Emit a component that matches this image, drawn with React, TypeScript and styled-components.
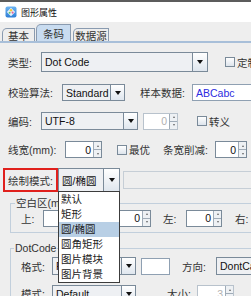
import React from 'react';
import styled, { createGlobalStyle } from 'styled-components';

const GlobalStyle = createGlobalStyle`
  html, body {
    margin: 0;
    padding: 0;
    background: #eeeeee;
  }
  body {
    font-family: "Liberation Sans", "Noto Sans CJK SC", sans-serif;
  }
`;

const Frame = styled.div`
  position: relative;
  width: 251px;
  height: 296px;
  overflow: hidden;
  box-sizing: border-box;
  border-top: 2px solid #5c5c5c;
  background: #eeeeee;
  color: #333333;
  font-size: 10.5px;
`;

const TitleBar = styled.div`
  display: flex;
  align-items: center;
  gap: 4px;
  height: 20px;
  padding-left: 5px;
  background: #ffffff;
  color: #111111;
  font-size: 9px;
`;

const TabStrip = styled.div`
  display: flex;
  align-items: flex-end;
  height: 21px;
  box-sizing: border-box;
  padding-left: 2px;
  border-bottom: 2px solid #a8bfd9;
`;

const Tab = styled.div<{ $active?: boolean; $w: number; $ml: number }>`
  display: flex;
  align-items: center;
  justify-content: center;
  box-sizing: border-box;
  width: ${(p) => p.$w}px;
  height: ${(p) => (p.$active ? 17 : 13)}px;
  margin-left: ${(p) => p.$ml}px;
  border: 1px solid #8a9bb0;
  border-bottom: none;
  border-top-left-radius: 5px;
  background: ${(p) => (p.$active ? '#c9dcf0' : '#eeeeee')};
  font-size: 10.5px;
  color: #333333;
`;

const Content = styled.div`
  display: flex;
  flex-direction: column;
  padding-left: 8px;
`;

const Row = styled.div<{ $h: number; $mt: number }>`
  display: flex;
  align-items: center;
  height: ${(p) => p.$h}px;
  margin-top: ${(p) => p.$mt}px;
  white-space: nowrap;
`;

const Label = styled.span<{ $w: number; $ml?: number }>`
  flex: none;
  width: ${(p) => p.$w}px;
  margin-left: ${(p) => p.$ml || 0}px;
  color: #333333;
`;

const ComboWrap = styled.div<{ $w: number }>`
  position: relative;
  flex: none;
  display: flex;
  box-sizing: border-box;
  width: ${(p) => p.$w}px;
  height: 100%;
  border: 1px solid #7a8a99;
  background: #eef0f3;
`;

const ComboValue = styled.span`
  flex: 1;
  display: flex;
  align-items: center;
  padding-left: 3px;
  overflow: hidden;
  color: #111111;
`;

const ComboButton = styled.span<{ $w: number }>`
  flex: none;
  display: flex;
  align-items: center;
  justify-content: center;
  width: ${(p) => p.$w}px;
  border-left: 1px solid #7a8a99;
  background: linear-gradient(#ffffff, #dfe6ee);

  &::after {
    content: '';
    border-left: 3.5px solid transparent;
    border-right: 3.5px solid transparent;
    border-top: 4px solid #111111;
  }
`;

const SpinWrap = styled.div<{ $w: number; $ml?: number; $disabled?: boolean }>`
  flex: none;
  display: flex;
  box-sizing: border-box;
  width: ${(p) => p.$w}px;
  height: 17px;
  margin-left: ${(p) => p.$ml || 0}px;
  border: 1px solid ${(p) => (p.$disabled ? '#b8c2cc' : '#7a8a99')};
  background: #ffffff;
  color: ${(p) => (p.$disabled ? '#b0b0b0' : '#111111')};
`;

const SpinValue = styled.span`
  flex: 1;
  display: flex;
  align-items: center;
  justify-content: flex-end;
  padding-right: 2px;
`;

const SpinButtons = styled.span`
  flex: none;
  display: flex;
  flex-direction: column;
  width: 7px;
  border-left: 1px solid #a0acb8;
`;

const SpinHalf = styled.span<{ $down?: boolean }>`
  flex: 1;
  display: flex;
  align-items: center;
  justify-content: center;
  background: #eef1f4;
  border-top: ${(p) => (p.$down ? '1px solid #a0acb8' : 'none')};

  &::after {
    content: '';
    border-left: 1.5px solid transparent;
    border-right: 1.5px solid transparent;
    ${(p) =>
      p.$down ? 'border-top: 2px solid #666;' : 'border-bottom: 2px solid #666;'}
  }
`;

const CheckGroup = styled.span<{ $w?: number; $ml: number }>`
  flex: none;
  display: flex;
  align-items: center;
  gap: 2px;
  width: ${(p) => (p.$w ? `${p.$w}px` : 'auto')};
  margin-left: ${(p) => p.$ml}px;
`;

const CheckBox = styled.span`
  display: inline-block;
  box-sizing: border-box;
  width: 10px;
  height: 10px;
  border: 1px solid #7a8a99;
  background: linear-gradient(#ffffff, #dde4ec);
`;

const TextField = styled.div<{ $w: number; $ml?: number; $h?: number; $faint?: boolean }>`
  flex: none;
  display: flex;
  align-items: center;
  box-sizing: border-box;
  width: ${(p) => p.$w}px;
  height: ${(p) => p.$h || 17}px;
  margin-left: ${(p) => p.$ml || 0}px;
  padding-left: 3px;
  border: 1px solid ${(p) => (p.$faint ? '#c6ced6' : '#8fa0b2')};
  background: ${(p) => (p.$faint ? '#eeeeee' : '#ffffff')};
  color: #2b2be0;
`;

const RedBox = styled.div`
  flex: none;
  display: flex;
  align-items: center;
  box-sizing: border-box;
  width: 55px;
  height: 24px;
  margin-left: -5px;
  padding-left: 3px;
  border: 2px solid #e0201c;
`;

const Group = styled.fieldset<{ $mt: number }>`
  box-sizing: border-box;
  width: 262px;
  margin: ${(p) => p.$mt}px 0 0 2px;
  padding: 0 0 6px 10px;
  border: 1px solid #c2cfdc;
  min-width: 0;
`;

const Legend = styled.legend<{ $ml: number }>`
  margin-left: ${(p) => p.$ml}px;
  padding: 0 1px;
  line-height: 12px;
  white-space: nowrap;
  color: #333333;
`;

const Popup = styled.div`
  position: absolute;
  left: -1px;
  top: 100%;
  z-index: 5;
  width: 62px;
  box-sizing: border-box;
  border: 1px solid #3c3c3c;
  background: #ffffff;
`;

const PopupItem = styled.div<{ $selected?: boolean }>`
  height: 15px;
  line-height: 15px;
  padding-left: 2px;
  color: #222222;
  background: ${(p) => (p.$selected ? '#b8cfe5' : 'transparent')};
`;

function Combo(props: { w: number; value?: string; btn?: number; children?: React.ReactNode }) {
  return (
    <ComboWrap $w={props.w}>
      <ComboValue>{props.value}</ComboValue>
      <ComboButton $w={props.btn || 13} />
      {props.children}
    </ComboWrap>
  );
}

function Spinner(props: { w: number; ml?: number; value: string; disabled?: boolean }) {
  return (
    <SpinWrap $w={props.w} $ml={props.ml} $disabled={props.disabled}>
      <SpinValue>{props.value}</SpinValue>
      <SpinButtons>
        <SpinHalf />
        <SpinHalf $down />
      </SpinButtons>
    </SpinWrap>
  );
}

function AppIcon() {
  return (
    <svg width="12" height="12" viewBox="0 0 12 12">
      <defs>
        <linearGradient id="ig" x1="0" y1="0" x2="0" y2="1">
          <stop offset="0" stopColor="#6cb4f2" />
          <stop offset="1" stopColor="#2f7fd6" />
        </linearGradient>
      </defs>
      <rect x="0.5" y="0.5" width="11" height="11" rx="2" fill="url(#ig)" />
      <path d="M6 1.8 L10.2 6 L6 10.2 L1.8 6 Z" fill="#e8f3ff" />
      <circle cx="6" cy="4.3" r="1.2" fill="#f4c431" />
      <circle cx="7.6" cy="6.6" r="1.1" fill="#e8609a" />
      <circle cx="4.6" cy="6.8" r="1" fill="#5bc46a" />
    </svg>
  );
}

const modes = ['默认', '矩形', '圆/椭圆', '圆角矩形', '图片模块', '图片背景'];

export default function App() {
  return (
    <>
      <GlobalStyle />
      <Frame>
        <TitleBar>
          <AppIcon />
          <span>图形属性</span>
        </TitleBar>
        <TabStrip>
          <Tab $w={33} $ml={0}>基本</Tab>
          <Tab $w={35} $ml={1} $active>条码</Tab>
          <Tab $w={36} $ml={2}>数据源</Tab>
        </TabStrip>
        <Content>
          <Row $h={20} $mt={9}>
            <Label $w={33}>类型:</Label>
            <Combo w={167} value="Dot Code" btn={14} />
            <CheckGroup $ml={17}>
              <CheckBox />
              定制
            </CheckGroup>
          </Row>
          <Row $h={17} $mt={12}>
            <Label $w={54}>校验算法:</Label>
            <Combo w={63} value="Standard" />
            <Label $w={52} $ml={15}>样本数据:</Label>
            <TextField $w={70}>ABCabc</TextField>
          </Row>
          <Row $h={18} $mt={11}>
            <Label $w={33}>编码:</Label>
            <Combo w={97} value="UTF-8" />
            <Spinner w={35} ml={5} value="0" disabled />
            <CheckGroup $ml={19}>
              <CheckBox />
              转义
            </CheckGroup>
          </Row>
          <Row $h={17} $mt={11}>
            <Label $w={57}>线宽(mm):</Label>
            <Spinner w={37} value="0" />
            <CheckGroup $w={46} $ml={15}>
              <CheckBox />
              最优
            </CheckGroup>
            <Label $w={52}>条宽削减:</Label>
            <Spinner w={32} value="0" />
          </Row>
          <Row $h={24} $mt={10}>
            <RedBox>绘制模式:</RedBox>
            <Combo w={62} value="圆/椭圆" btn={15}>
              <Popup>
                {modes.map((m) => (
                  <PopupItem key={m} $selected={m === '圆/椭圆'}>
                    {m}
                  </PopupItem>
                ))}
              </Popup>
            </Combo>
            <TextField $w={140} $h={18} $ml={3} $faint />
          </Row>
          <Group $mt={5}>
            <Legend $ml={-6}>空白区(mm)</Legend>
            <Row $h={16} $mt={1}>
              <Label $w={22}>上:</Label>
              <Spinner w={108} value="0" />
              <Label $w={23} $ml={12}>左:</Label>
              <Spinner w={36} value="0" />
              <Label $w={20} $ml={13}>右:</Label>
            </Row>
          </Group>
          <Group $mt={9}>
            <Legend $ml={-7}>DotCode</Legend>
            <Row $h={18} $mt={3}>
              <Label $w={31}>格式:</Label>
              <Combo w={84} value="FNC1" />
              <TextField $w={29} $ml={5} />
              <Label $w={34} $ml={12}>方向:</Label>
              <Combo w={60} value="DontCare" />
            </Row>
            <Row $h={17} $mt={10}>
              <Label $w={31}>模式:</Label>
              <Combo w={84} value="Default" />
              <Label $w={30} $ml={31}>大小:</Label>
              <Spinner w={37} value="3" disabled />
            </Row>
          </Group>
        </Content>
      </Frame>
    </>
  );
}
